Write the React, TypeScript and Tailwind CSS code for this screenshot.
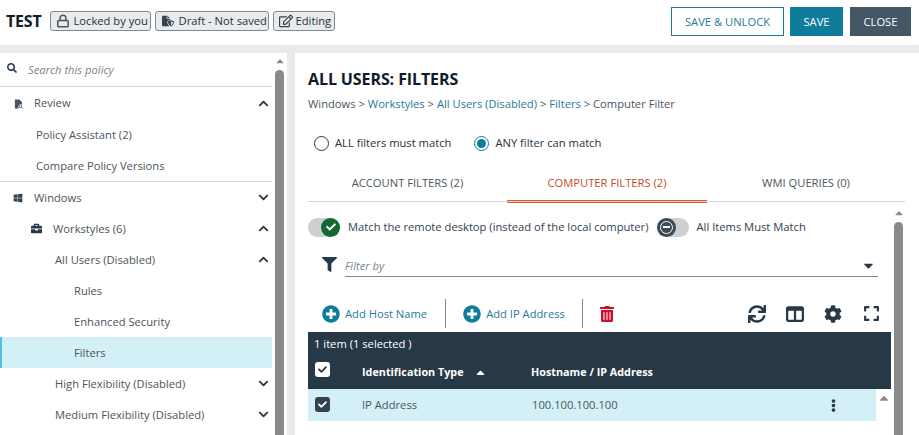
import React from "react";
import {
  FaSearch, FaWindows, FaBriefcase, FaFilter, FaPlusCircle, FaTrashAlt, FaSync, FaCog, FaExpand,
  FaEllipsisV, FaCheck, FaChevronUp, FaChevronDown, FaRegEdit, FaCaretDown, FaCaretUp,
} from "react-icons/fa";
import { FaFileShield, FaTableColumns } from "react-icons/fa6";
import { LuLock } from "react-icons/lu";

const Badge = ({ icon, label, w }: { icon: React.ReactNode; label: string; w: string }) => (
  <div className={`h-5 ${w} flex items-center pl-[5px] gap-[4px] rounded-[3px] border border-[#7d8a94] bg-[#e9eaeb] text-[11.2px] text-[#27323c] whitespace-nowrap`}>
    {icon}
    <span>{label}</span>
  </div>
);

const Row = ({ label, pad, icon, chevron, active, textClass = "mt-[2px]", color = "text-[#4a5560]" }: { label: string; pad: string; icon?: React.ReactNode; chevron?: "up" | "down"; active?: boolean; textClass?: string; color?: string }) => (
  <div className={`h-[31px] shrink-0 flex items-center ${pad} pr-[3px] text-[11.2px] ${color} ${active ? "bg-[#d2f0f6] border-l-2 border-[#4cc3df]" : ""}`}>
    {icon}
    <span className={`flex-1 ${textClass}`}>{label}</span>
    {chevron === "up" && <FaChevronUp className="text-[#27384a] text-[11px]" />}
    {chevron === "down" && <FaChevronDown className="text-[#27384a] text-[11px]" />}
  </div>
);

const Scrollbar = ({ className = "" }: { className?: string }) => (
  <div className={`flex flex-col items-center shrink-0 w-[9px] ${className}`}>
    <FaCaretUp className="text-[#8a8a8a] text-[14px] h-[12px] shrink-0 mt-[2px]" />
    <div className="mt-[3px] w-[9px] flex-1 rounded-t-[5px] bg-[#8a8a8a]" />
  </div>
);

export default function App() {
  return (
    <div className="w-[919px] h-[435px] overflow-hidden flex flex-col bg-[#e9eaeb] font-['Open_Sans',sans-serif] text-[#27323c]">
      <header className="h-[45px] shrink-0 bg-white flex items-center pl-[6px] pr-2 pb-[3px]">
        <span className="text-[16px] font-bold text-[#0f1c2a] mr-[8px] tracking-[-0.2px]">TEST</span>
        <div className="flex gap-1">
          <Badge w="w-[101px]" label="Locked by you" icon={<LuLock strokeWidth={2.6} className="text-[14px] text-[#4a5560]" />} />
          <Badge w="w-[114px]" label="Draft - Not saved" icon={<FaFileShield className="text-[12px] text-[#33424f] ml-[1px] mr-[1px]" />} />
          <Badge w="w-[62px]" label="Editing" icon={<FaRegEdit className="text-[14px] text-[#33424f] -mr-[1px]" />} />
        </div>
        <div className="ml-auto flex gap-[6px] text-[11.2px] mt-[1px]">
          <div className="w-[113px] h-[29px] pt-[1px] flex items-center justify-center border border-[#1f7a99] text-[#1f7a99] bg-white">SAVE &amp; UNLOCK</div>
          <div className="w-[53px] h-[29px] pt-[1px] flex items-center justify-center bg-[#0f7c9c] text-white">SAVE</div>
          <div className="w-[61px] h-[29px] pt-[1px] ml-[1px] flex items-center justify-center bg-[#445766] text-white">CLOSE</div>
        </div>
      </header>
      <div className="mt-2 flex-1 min-h-0 flex">
        <aside className="w-[287px] shrink-0 bg-white flex overflow-hidden">
          <div className="w-[272px] shrink-0 flex flex-col">
            <div className="h-[34px] shrink-0 border-b border-[#d5d8da] flex items-center pl-[7px]">
              <FaSearch className="text-[10px] text-[#27384a] mb-[3px]" />
              <span className="ml-[11px] mt-[1px] text-[11.2px] italic text-[#7b858d]">Search this policy</span>
            </div>
            <div className="h-[1px] shrink-0" />
            <Row label="Review" pad="pl-[14px]" chevron="up" textClass="" icon={
              <svg viewBox="0 0 10 10" className="w-[9px] h-[10px] mr-[11px]">
                <path d="M1 0h5l3 3v2.4A3 3 0 0 0 5 9.5V10H1z" fill="#4a5560" />
                <circle cx="7" cy="7.4" r="1.6" fill="none" stroke="#4a5560" strokeWidth="1" />
                <path d="M8.2 8.6 9.6 10" stroke="#4a5560" strokeWidth="1" />
              </svg>
            } />
            <Row label="Policy Assistant (2)" pad="pl-[36px]" />
            <Row label="Compare Policy Versions" pad="pl-[36px]" />
            <div className="h-px shrink-0 bg-[#d5d8da]" />
            <Row label="Windows" pad="pl-[13px]" chevron="down" icon={<FaWindows className="text-[10px] text-[#33424f] mr-[11px]" />} />
            <Row label="Workstyles (6)" pad="pl-[31px]" chevron="up" icon={<FaBriefcase className="text-[11px] text-[#27384a] mr-[11px]" />} />
            <Row label="All Users (Disabled)" pad="pl-[55px]" chevron="up" />
            <Row label="Rules" pad="pl-[74px]" />
            <Row label="Enhanced Security" pad="pl-[74px]" />
            <Row label="Filters" pad="pl-[72px]" active />
            <Row label="High Flexibility (Disabled)" pad="pl-[55px]" chevron="down" />
            <Row label="Medium Flexibility (Disabled)" pad="pl-[55px]" chevron="down" />
          </div>
          <Scrollbar className="ml-[3px]" />
        </aside>
        <main className="ml-2 flex-1 min-w-0 bg-white flex flex-col pl-[13px]">
          <h1 className="mt-[16px] h-[20px] leading-[20px] text-[16px] font-bold text-[#0f1c2a] tracking-[-0.1px]">ALL USERS: FILTERS</h1>
          <div className="mt-[6px] h-[18px] leading-[18px] text-[11.2px] text-[#4a5560]">
            Windows &gt; <span className="text-[#1f7a99]">Workstyles</span> &gt; <span className="text-[#1f7a99]">All Users (Disabled)</span> &gt; <span className="text-[#1f7a99]">Filters</span> &gt; Computer Filter
          </div>
          <div className="mt-[21px] h-[18px] flex items-center text-[11.2px] text-[#27323c]">
            <span className="ml-[6px] w-[15px] h-[15px] rounded-full border border-[#27384a] bg-white" />
            <span className="ml-[6px]">ALL filters must match</span>
            <span className="ml-[23px] w-[15px] h-[15px] rounded-full border border-[#0f7c9c] flex items-center justify-center"><span className="w-[9px] h-[9px] rounded-full bg-[#0f7c9c]" /></span>
            <span className="ml-[6px]">ANY filter can match</span>
          </div>
          <div className="mt-[20px] w-[597px] h-[30px] flex text-[11.2px] border-b border-[#d5d8da] relative">
            <div className="w-[199px] pt-[3px] text-center text-[#4a5560]">ACCOUNT FILTERS (2)</div>
            <div className="w-[200px] pt-[3px] text-center text-[#c8491d] border-b-[3px] border-double border-[#e2562a] h-[31px]">COMPUTER FILTERS (2)</div>
            <div className="w-[198px] pt-[3px] text-center text-[#4a5560]">WMI QUERIES (0)</div>
          </div>
          <div className="flex-1 min-h-0 flex">
            <div className="w-[583px] shrink-0 flex flex-col">
              <div className="mt-[15px] h-[20px] flex items-center text-[11.2px] text-[#33424f]">
                <div className="relative w-8 h-[19px] rounded-full bg-[#ccd0d3]">
                  <span className="absolute right-0 top-0 w-[19px] h-[19px] rounded-full bg-[#12682f] flex items-center justify-center"><FaCheck className="text-white text-[10px]" /></span>
                </div>
                <span className="ml-2">Match the remote desktop (instead of the local computer)</span>
                <div className="relative ml-[8px] w-8 h-[19px] rounded-full bg-[#ccd0d3]">
                  <span className="absolute left-0 top-0 w-[19px] h-[19px] rounded-full bg-[#3a4a57] flex items-center justify-center">
                    <span className="w-[13px] h-[13px] rounded-full border-[1.5px] border-white flex items-center justify-center"><span className="w-[7px] h-[1.5px] bg-white" /></span>
                  </span>
                </div>
                <span className="ml-[8px]">All Items Must Match</span>
              </div>
              <div className="mt-[18px] flex items-start ml-[14px] w-[556px]">
                <FaFilter className="text-[15px] text-[#27384a] mt-[2px]" />
                <div className="ml-[8px] flex-1 h-[22px] border-b border-[#7d8a94] flex items-center justify-between pr-[2px]">
                  <span className="text-[11.2px] italic text-[#7b858d] mt-[2px]">Filter by</span>
                  <FaCaretDown className="text-[#27384a] text-[15px]" />
                </div>
              </div>
              <div className="mt-[22px] h-[29px] flex items-center text-[11.2px] text-[#1f7a99]">
                <FaPlusCircle className="ml-[14px] text-[18px] text-[#0f7c9c]" />
                <span className="ml-[5px] mt-[2px]">Add Host Name</span>
                <span className="ml-[18px] w-px h-[29px] bg-[#7d8a94]" />
                <FaPlusCircle className="ml-[17px] text-[18px] text-[#0f7c9c]" />
                <span className="ml-[5px] mt-[2px]">Add IP Address</span>
                <span className="ml-[17px] w-px h-[29px] bg-[#7d8a94]" />
                <FaTrashAlt className="ml-[16px] text-[16px] text-[#c8102e]" />
                <div className="ml-auto flex items-center text-[#27384a]">
                  <FaSync className="text-[18px]" />
                  <FaTableColumns className="ml-[20px] text-[18px]" />
                  <FaCog className="ml-[20px] text-[18px]" />
                  <FaExpand className="ml-[21px] mr-[11px] text-[17px]" />
                </div>
              </div>
              <div className="mt-[4px] h-[57px] shrink-0 bg-[#273847] text-white text-[11.2px] flex flex-col">
                <div className="h-[24px] flex items-center pl-[6px]">1 item (1 selected )</div>
                <div className="flex-1 flex items-center text-[10.8px]">
                  <span className="ml-[7px] w-[15px] h-[15px] rounded-[3px] bg-white flex items-center justify-center mb-[6px]"><FaCheck className="text-[#273847] text-[9px]" /></span>
                  <span className="ml-[32px] w-[101px] font-bold whitespace-nowrap">Identification Type</span>
                  <FaCaretUp className="ml-[11px] text-[13px] text-white" />
                  <span className="ml-[44px] font-bold">Hostname / IP Address</span>
                </div>
              </div>
              <div className="flex flex-1 min-h-0">
                <div className="w-[568px] h-[32px] bg-[#d2f0f6] flex items-center text-[11.2px] text-[#4a5560]">
                  <span className="ml-[7px] w-[15px] h-[15px] rounded-[3px] bg-[#33424f] flex items-center justify-center mb-[2px]"><FaCheck className="text-white text-[9px]" /></span>
                  <span className="ml-[32px] w-[170px]">IP Address</span>
                  <span>100.100.100.100</span>
                  <FaEllipsisV className="ml-auto mr-[36px] text-[#27384a] text-[13px]" />
                </div>
                <div className="w-[15px] flex justify-center"><FaCaretUp className="text-[#8a8a8a] text-[14px] mt-[2px]" /></div>
              </div>
            </div>
            <Scrollbar className="ml-[3px] mt-[3px]" />
          </div>
        </main>
      </div>
    </div>
  );
}
